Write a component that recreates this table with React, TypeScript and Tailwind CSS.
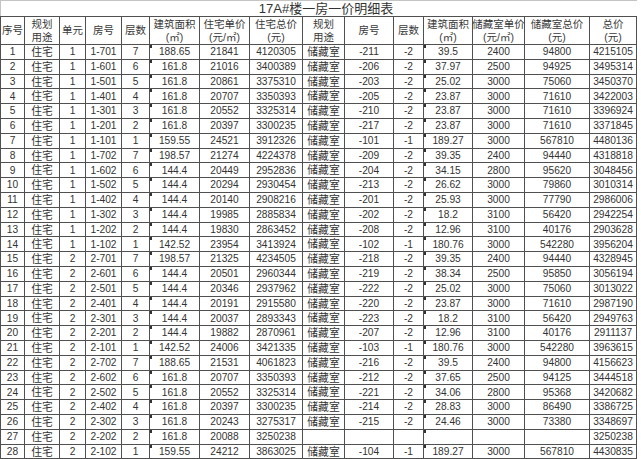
import React from "react";

type Row = (string | number)[];

const rows: Row[] = [
  [1, "住宅", 1, "1-701", 7, "188.65", "21841", "4120305", "储藏室", "-211", "-2", "39.5", "2400", "94800", "4215105"],
  [2, "住宅", 1, "1-601", 6, "161.8", "21016", "3400389", "储藏室", "-206", "-2", "37.97", "2500", "94925", "3495314"],
  [3, "住宅", 1, "1-501", 5, "161.8", "20861", "3375310", "储藏室", "-203", "-2", "25.02", "3000", "75060", "3450370"],
  [4, "住宅", 1, "1-401", 4, "161.8", "20707", "3350393", "储藏室", "-205", "-2", "23.87", "3000", "71610", "3422003"],
  [5, "住宅", 1, "1-301", 3, "161.8", "20552", "3325314", "储藏室", "-210", "-2", "23.87", "3000", "71610", "3396924"],
  [6, "住宅", 1, "1-201", 2, "161.8", "20397", "3300235", "储藏室", "-217", "-2", "23.87", "3000", "71610", "3371845"],
  [7, "住宅", 1, "1-101", 1, "159.55", "24521", "3912326", "储藏室", "-101", "-1", "189.27", "3000", "567810", "4480136"],
  [8, "住宅", 1, "1-702", 7, "198.57", "21274", "4224378", "储藏室", "-209", "-2", "39.35", "2400", "94440", "4318818"],
  [9, "住宅", 1, "1-602", 6, "144.4", "20449", "2952836", "储藏室", "-204", "-2", "34.15", "2800", "95620", "3048456"],
  [10, "住宅", 1, "1-502", 5, "144.4", "20294", "2930454", "储藏室", "-213", "-2", "26.62", "3000", "79860", "3010314"],
  [11, "住宅", 1, "1-402", 4, "144.4", "20140", "2908216", "储藏室", "-201", "-2", "25.93", "3000", "77790", "2986006"],
  [12, "住宅", 1, "1-302", 3, "144.4", "19985", "2885834", "储藏室", "-202", "-2", "18.2", "3100", "56420", "2942254"],
  [13, "住宅", 1, "1-202", 2, "144.4", "19830", "2863452", "储藏室", "-208", "-2", "12.96", "3100", "40176", "2903628"],
  [14, "住宅", 1, "1-102", 1, "142.52", "23954", "3413924", "储藏室", "-102", "-1", "180.76", "3000", "542280", "3956204"],
  [15, "住宅", 2, "2-701", 7, "198.57", "21325", "4234505", "储藏室", "-218", "-2", "39.35", "2400", "94440", "4328945"],
  [16, "住宅", 2, "2-601", 6, "144.4", "20501", "2960344", "储藏室", "-219", "-2", "38.34", "2500", "95850", "3056194"],
  [17, "住宅", 2, "2-501", 5, "144.4", "20346", "2937962", "储藏室", "-222", "-2", "25.02", "3000", "75060", "3013022"],
  [18, "住宅", 2, "2-401", 4, "144.4", "20191", "2915580", "储藏室", "-220", "-2", "23.87", "3000", "71610", "2987190"],
  [19, "住宅", 2, "2-301", 3, "144.4", "20037", "2893343", "储藏室", "-223", "-2", "18.2", "3100", "56420", "2949763"],
  [20, "住宅", 2, "2-201", 2, "144.4", "19882", "2870961", "储藏室", "-207", "-2", "12.96", "3100", "40176", "2911137"],
  [21, "住宅", 2, "2-101", 1, "142.52", "24006", "3421335", "储藏室", "-103", "-1", "180.76", "3000", "542280", "3963615"],
  [22, "住宅", 2, "2-702", 7, "188.65", "21531", "4061823", "储藏室", "-216", "-2", "39.5", "2400", "94800", "4156623"],
  [23, "住宅", 2, "2-602", 6, "161.8", "20707", "3350393", "储藏室", "-212", "-2", "37.65", "2500", "94125", "3444518"],
  [24, "住宅", 2, "2-502", 5, "161.8", "20552", "3325314", "储藏室", "-221", "-2", "34.06", "2800", "95368", "3420682"],
  [25, "住宅", 2, "2-402", 4, "161.8", "20397", "3300235", "储藏室", "-214", "-2", "28.83", "3000", "86490", "3386725"],
  [26, "住宅", 2, "2-302", 3, "161.8", "20243", "3275317", "储藏室", "-215", "-2", "24.46", "3000", "73380", "3348697"],
  [27, "住宅", 2, "2-202", 2, "161.8", "20088", "3250238", "", "", "", "", "", "", "3250238"],
  [28, "住宅", 2, "2-102", 1, "159.55", "24212", "3863025", "储藏室", "-104", "-1", "189.27", "3000", "567810", "4430835"],
];

const headers: string[][] = [
  ["序号"],
  ["规划", "用途"],
  ["单元"],
  ["房号"],
  ["层数"],
  ["建筑面积", "(㎡)"],
  ["住宅单价", "(元/㎡)"],
  ["住宅总价", "(元)"],
  ["规划", "用途"],
  ["房号"],
  ["层数"],
  ["建筑面积", "(㎡)"],
  ["储藏室单价", "(元/㎡)"],
  ["储藏室总价", "(元)"],
  ["总价", "(元)"],
];

const cell =
  "relative flex items-center justify-center border-r border-b border-[#505050] whitespace-nowrap overflow-hidden";

export default function App() {
  return (
    <div
      className="w-[641px] h-[459px] overflow-hidden bg-white text-[#333333]"
      style={{ fontFamily: '"Liberation Sans", "Noto Sans CJK SC", sans-serif' }}
    >
      <div className="w-[637px] h-[16px] border-t border-l border-[#c4c4c4] flex items-center justify-center pl-[14px] text-[13px] leading-none">
        17A#楼一房一价明细表
      </div>
      <div className="w-[637px] grid grid-cols-[24px_35px_26px_36px_28px_50px_50px_53px_42px_49px_30px_49px_52px_65px_47px] grid-rows-[28px] auto-rows-[14.8px] border-l border-t border-[#505050] text-[10.2px]">
        {headers.map((h, i) => (
          <div key={`h${i}`} className={`${cell} flex-col leading-[12.5px] text-[10.5px] text-[#3a3a3a]`}>
            {h.map((t, j) => (
              <span key={j}>{t}</span>
            ))}
          </div>
        ))}
        {rows.map((r, ri) =>
          r.map((v, ci) => (
            <div
              key={`${ri}-${ci}`}
              className={`${cell} leading-none pt-[1px] ${ci === 1 || ci === 8 ? "text-[10.8px]" : ""}`}
            >
              {(ci === 5 || ci === 11) && (
                <span className="absolute left-0 top-0 w-[2px] h-[3px] bg-[#333]" />
              )}
              {v}
            </div>
          ))
        )}
      </div>
    </div>
  );
}
